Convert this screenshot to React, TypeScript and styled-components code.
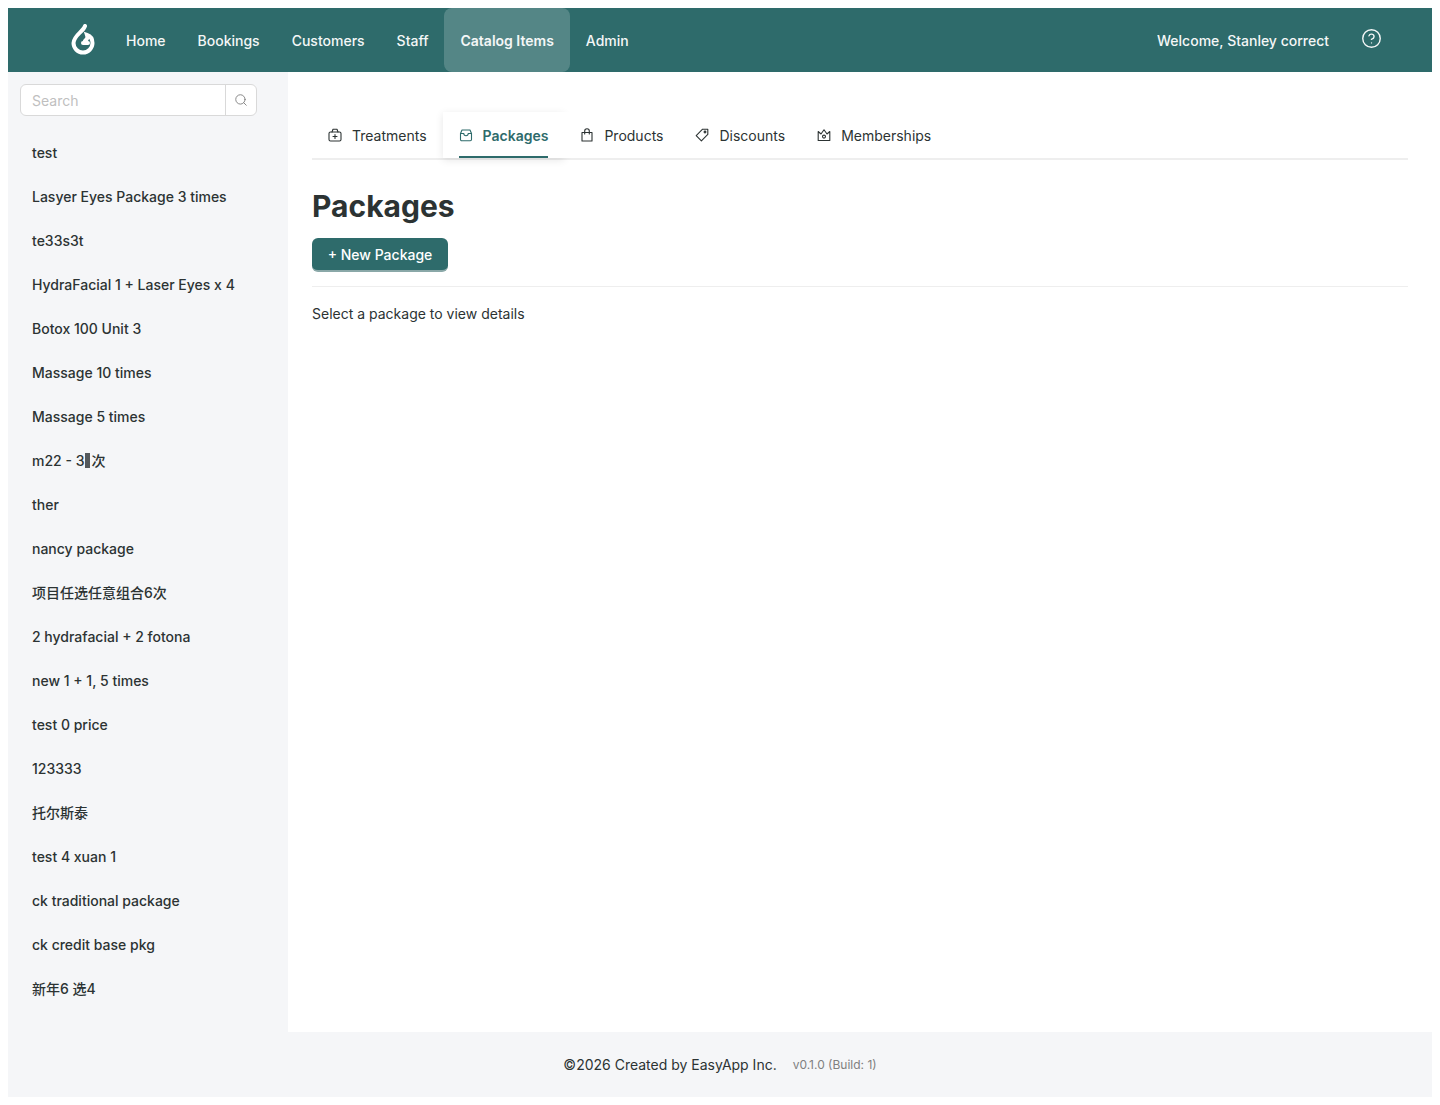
import React from "react";
import styled, { createGlobalStyle } from "styled-components";
import { CircleHelp, Search } from "lucide-react";

const GlobalStyle = createGlobalStyle`
  html, body {
    background: #fff;
  }
  body {
    margin: 8px;
    font-family: Inter, "Noto Sans CJK SC", sans-serif;
    font-size: 14px;
    color: #2c3333;
  }
  * {
    box-sizing: border-box;
  }
`;

const Layout = styled.div`
  display: flex;
  flex-direction: column;
  height: 1089px;
  background: #f5f6f8;
`;

const Header = styled.header`
  display: flex;
  align-items: center;
  height: 64px;
  flex-shrink: 0;
  padding: 0 50px 0 60px;
  background: #2e6b6b;
  color: #fff;
`;

const Logo = styled.svg`
  width: 30px;
  height: 32px;
  margin-right: 12px;
`;

const NavItem = styled.a<{ $active?: boolean }>`
  display: flex;
  align-items: center;
  height: 64px;
  padding: 0 16px;
  border-radius: 8px;
  color: #fff;
  opacity: 0.95;
  font-size: 14px;
  font-weight: ${(p) => (p.$active ? 600 : 500)};
  background: ${(p) => (p.$active ? "rgba(255, 255, 255, 0.2)" : "transparent")};
`;

const HeaderRight = styled.div`
  display: flex;
  align-items: center;
  margin-left: auto;
  gap: 32px;
  font-weight: 500;
  opacity: 0.95;
`;

const HelpIcon = styled(CircleHelp)`
  width: 21px;
  height: 21px;
  stroke-width: 1.6;
  margin-top: -4px;
`;

const Body = styled.div`
  display: flex;
  flex: 1;
  min-height: 0;
`;

const Sidebar = styled.aside`
  width: 280px;
  flex-shrink: 0;
  padding: 12px;
  background: #f5f6f8;
`;

const SearchBox = styled.div`
  display: flex;
  width: 237px;
  height: 32px;
  margin-bottom: 14px;
  background: #fff;
  border: 1px solid #d9d9d9;
  border-radius: 6px;
`;

const SearchInput = styled.input`
  flex: 1;
  min-width: 0;
  padding: 0 11px;
  border: none;
  outline: none;
  background: transparent;
  border-radius: 6px;
  font-family: inherit;
  font-size: 14px;
  color: #2c3333;

  &::placeholder {
    color: #bfbfbf;
    opacity: 1;
  }
`;

const SearchButton = styled.div`
  display: flex;
  align-items: center;
  justify-content: center;
  width: 31px;
  border-left: 1px solid #d9d9d9;
  color: #7a7a7a;
`;

const PackageList = styled.ul`
  margin: 0;
  padding: 0;
  list-style: none;
`;

const PackageItem = styled.li`
  display: flex;
  align-items: center;
  height: 44px;
  padding-left: 12px;
  font-size: 14px;
  font-weight: 500;
  color: #2c3333;
`;

const MissingGlyph = styled.span`
  display: inline-block;
  width: 5px;
  height: 15px;
  margin: 0 1px;
  background: #55595c;
`;

const Content = styled.main`
  flex: 1;
  padding: 40px 24px 0;
  background: #fff;
`;

const Tabs = styled.nav`
  display: flex;
  height: 48px;
  border-bottom: 2px solid #eeeeee;
`;

const Tab = styled.a<{ $active?: boolean }>`
  position: relative;
  display: flex;
  align-items: center;
  gap: ${(p) => (p.$active ? "10px" : "10px")};
  height: 46px;
  padding: 0 16px;
  font-size: 14px;
  font-weight: ${(p) => (p.$active ? 600 : 400)};
  color: ${(p) => (p.$active ? "#2e6b6b" : "#2c3333")};
  background: #fff;
  box-shadow: ${(p) => (p.$active ? "0 2px 8px rgba(0, 0, 0, 0.1)" : "none")};

  ${(p) =>
    p.$active &&
    `
    &::after {
      content: "";
      position: absolute;
      left: 16px;
      right: 16px;
      bottom: 0;
      height: 2px;
      background: #2e6b6b;
    }
  `}
`;

const TabIcon = styled.svg`
  width: 14px;
  height: 14px;
  fill: none;
  stroke: currentColor;
  stroke-width: 1.1;
  stroke-linecap: round;
  stroke-linejoin: round;
`;

const Title = styled.h1`
  margin: 28px 0 14px;
  font-size: 30px;
  line-height: 36px;
  font-weight: 700;
  color: #2c3333;
`;

const NewButton = styled.button`
  display: block;
  width: 136px;
  height: 34px;
  padding: 0;
  border: none;
  border-bottom: 2px solid #8aa8a8;
  border-radius: 6px;
  background: #2e6b6b;
  color: #fff;
  font-family: inherit;
  font-size: 14px;
  font-weight: 500;
`;

const Divider = styled.hr`
  margin: 14px 0 18px;
  border: none;
  border-top: 1px solid #eeeeee;
`;

const Hint = styled.p`
  margin: 0;
  font-size: 14px;
  line-height: 18px;
  color: #2c3333;
`;

const Footer = styled.footer`
  display: flex;
  align-items: center;
  justify-content: center;
  gap: 16px;
  height: 65px;
  flex-shrink: 0;
  background: #f5f6f8;
  font-size: 14px;
  color: #2c3333;
`;

const Version = styled.span`
  font-size: 12px;
  color: #808080;
`;

const navItems = ["Home", "Bookings", "Customers", "Staff", "Catalog Items", "Admin"];

const packages: React.ReactNode[] = [
  "test",
  "Lasyer Eyes Package 3 times",
  "te33s3t",
  "HydraFacial 1 + Laser Eyes x 4",
  "Botox 100 Unit 3",
  "Massage 10 times",
  "Massage 5 times",
  <>
    m22 - 3<MissingGlyph />次
  </>,
  "ther",
  "nancy package",
  "项目任选任意组合6次",
  "2 hydrafacial + 2 fotona",
  "new 1 + 1, 5 times",
  "test 0 price",
  "123333",
  "托尔斯泰",
  "test 4 xuan 1",
  "ck traditional package",
  "ck credit base pkg",
  "新年6 选4",
];

const TreatmentsIcon = () => (
  <TabIcon viewBox="0 0 14 14">
    <rect x="1" y="4" width="12" height="9" rx="1.5" />
    <path d="M4 4 L5 1.2 H9 L10 4" />
    <path d="M7 6.5 V10.5 M5 8.5 H9" />
  </TabIcon>
);

const PackagesIcon = () => (
  <TabIcon viewBox="0 0 14 14">
    <path d="M3 2 H11 L12.5 5.5 V11.5 A1.2 1.2 0 0 1 11.3 12.7 H2.7 A1.2 1.2 0 0 1 1.5 11.5 V5.5 Z" />
    <path d="M1.5 5.5 H4.8 A2.2 2.2 0 0 0 9.2 5.5 H12.5" />
  </TabIcon>
);

const ProductsIcon = () => (
  <TabIcon viewBox="0 0 14 14">
    <path d="M2 4.5 H12 V13 H2 Z" />
    <path d="M4.7 6 V3 A2.3 2.3 0 0 1 9.3 3 V6" />
  </TabIcon>
);

const DiscountsIcon = () => (
  <TabIcon viewBox="0 0 14 14">
    <path d="M7.6 1.2 H12.8 V6.4 L6.4 12.8 L1.2 7.6 Z" />
    <circle cx="10" cy="4" r="0.9" />
  </TabIcon>
);

const MembershipsIcon = () => (
  <TabIcon viewBox="0 0 14 14">
    <path d="M1.2 3.5 L4 6 L7 1.8 L10 6 L12.8 3.5 V12.5 H1.2 Z" />
    <circle cx="7" cy="8.6" r="1.5" />
  </TabIcon>
);

const tabs = [
  { label: "Treatments", icon: <TreatmentsIcon /> },
  { label: "Packages", icon: <PackagesIcon />, active: true },
  { label: "Products", icon: <ProductsIcon /> },
  { label: "Discounts", icon: <DiscountsIcon /> },
  { label: "Memberships", icon: <MembershipsIcon /> },
];

const App = () => {
  return (
    <>
      <GlobalStyle />
      <Layout>
        <Header>
          <Logo viewBox="0 0 30 32" fill="none">
            <path
              d="M17 2 C15 8 6 11 5.5 19 A9.5 9.5 0 1 0 24.5 19 C24.5 15 22 12 19 11 C20 14 19 15 17 17"
              stroke="#fff"
              strokeWidth="4"
              strokeLinecap="round"
            />
            <path d="M15 19 H20" stroke="#fff" strokeWidth="4" strokeLinecap="round" />
          </Logo>
          {navItems.map((item) => (
            <NavItem key={item} $active={item === "Catalog Items"}>
              {item}
            </NavItem>
          ))}
          <HeaderRight>
            <span>Welcome, Stanley correct</span>
            <HelpIcon />
          </HeaderRight>
        </Header>
        <Body>
          <Sidebar>
            <SearchBox>
              <SearchInput placeholder="Search" />
              <SearchButton>
                <Search size={14} strokeWidth={1.5} />
              </SearchButton>
            </SearchBox>
            <PackageList>
              {packages.map((pkg, i) => (
                <PackageItem key={i}>{pkg}</PackageItem>
              ))}
            </PackageList>
          </Sidebar>
          <Content>
            <Tabs>
              {tabs.map((tab) => (
                <Tab key={tab.label} $active={tab.active}>
                  {tab.icon}
                  {tab.label}
                </Tab>
              ))}
            </Tabs>
            <Title>Packages</Title>
            <NewButton>+ New Package</NewButton>
            <Divider />
            <Hint>Select a package to view details</Hint>
          </Content>
        </Body>
        <Footer>
          <span>©2026 Created by EasyApp Inc.</span>
          <Version>v0.1.0 (Build: 1)</Version>
        </Footer>
      </Layout>
    </>
  );
};

export default App;
